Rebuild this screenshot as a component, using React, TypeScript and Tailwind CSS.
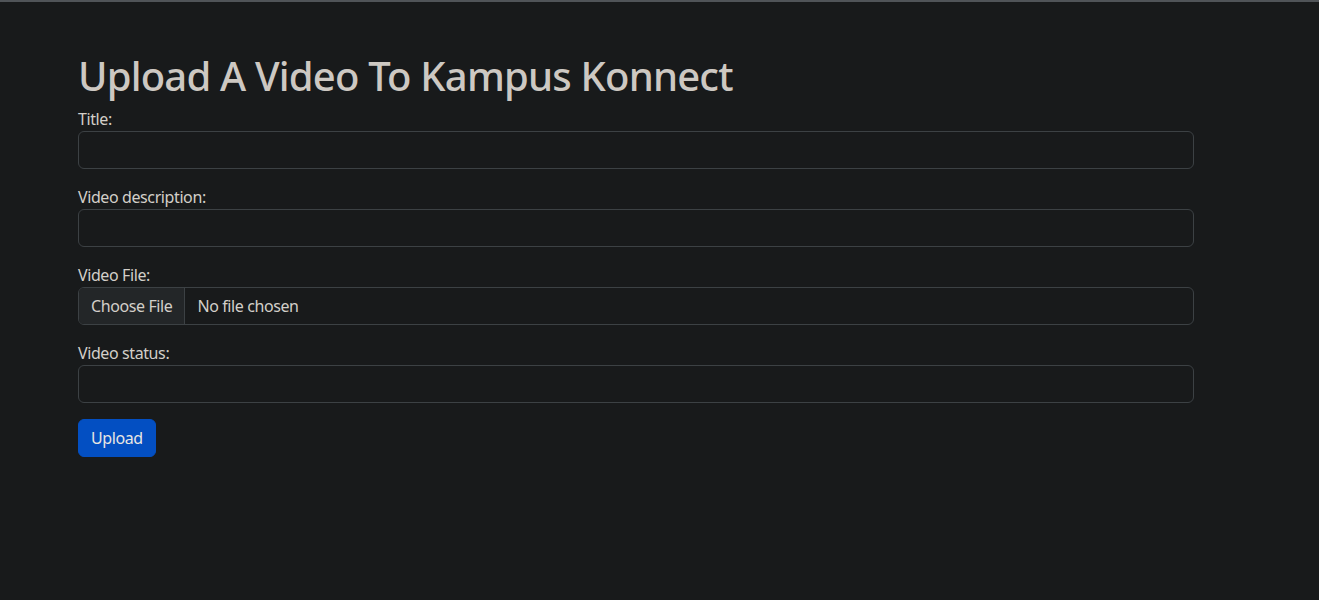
import React from "react";

const font = { fontFamily: '"Noto Sans", "Open Sans", sans-serif' };

function Field({ label, children }: { label: string; children: React.ReactNode }) {
  return (
    <div className="mb-4 flex flex-col">
      <label className="text-[16px] leading-[24px] tracking-[-0.4px] text-[#d3cfc9]">{label}</label>
      {children}
    </div>
  );
}

function TextInput() {
  return (
    <input
      type="text"
      className="block h-[38px] w-full rounded-[6px] border border-[#3c4144] bg-[#181a1b] px-3 text-[16px] text-[#d3cfc9] outline-none"
    />
  );
}

export default function App() {
  return (
    <div className="min-h-[600px] w-full border-t-2 border-[#505458] bg-[#181a1b]" style={font}>
      <div className="ml-[78px] w-[1116px] pt-[50px]">
        <h1 className="mb-[7px] text-[40px] font-medium leading-[48px] tracking-[-0.8px] text-[#cdc8c2]">
          Upload A Video To Kampus Konnect
        </h1>
        <form onSubmit={(e) => e.preventDefault()}>
          <Field label="Title:">
            <TextInput />
          </Field>
          <Field label="Video description:">
            <TextInput />
          </Field>
          <Field label="Video File:">
            <div className="flex h-[38px] w-full overflow-hidden rounded-[6px] border border-[#3c4144] bg-[#181a1b] text-[16px] tracking-[-0.4px] text-[#d3cfc9]">
              <div className="flex items-center border-r border-[#3c4144] bg-[#232628] px-3">Choose File</div>
              <div className="flex items-center px-3">No file chosen</div>
            </div>
          </Field>
          <Field label="Video status:">
            <TextInput />
          </Field>
          <button
            type="submit"
            className="h-[38px] rounded-[6px] border border-[#034fc2] bg-[#034fc2] px-3 text-[16px] leading-[24px] tracking-[-0.4px] text-[#e8e6e3]"
          >
            Upload
          </button>
        </form>
      </div>
    </div>
  );
}
